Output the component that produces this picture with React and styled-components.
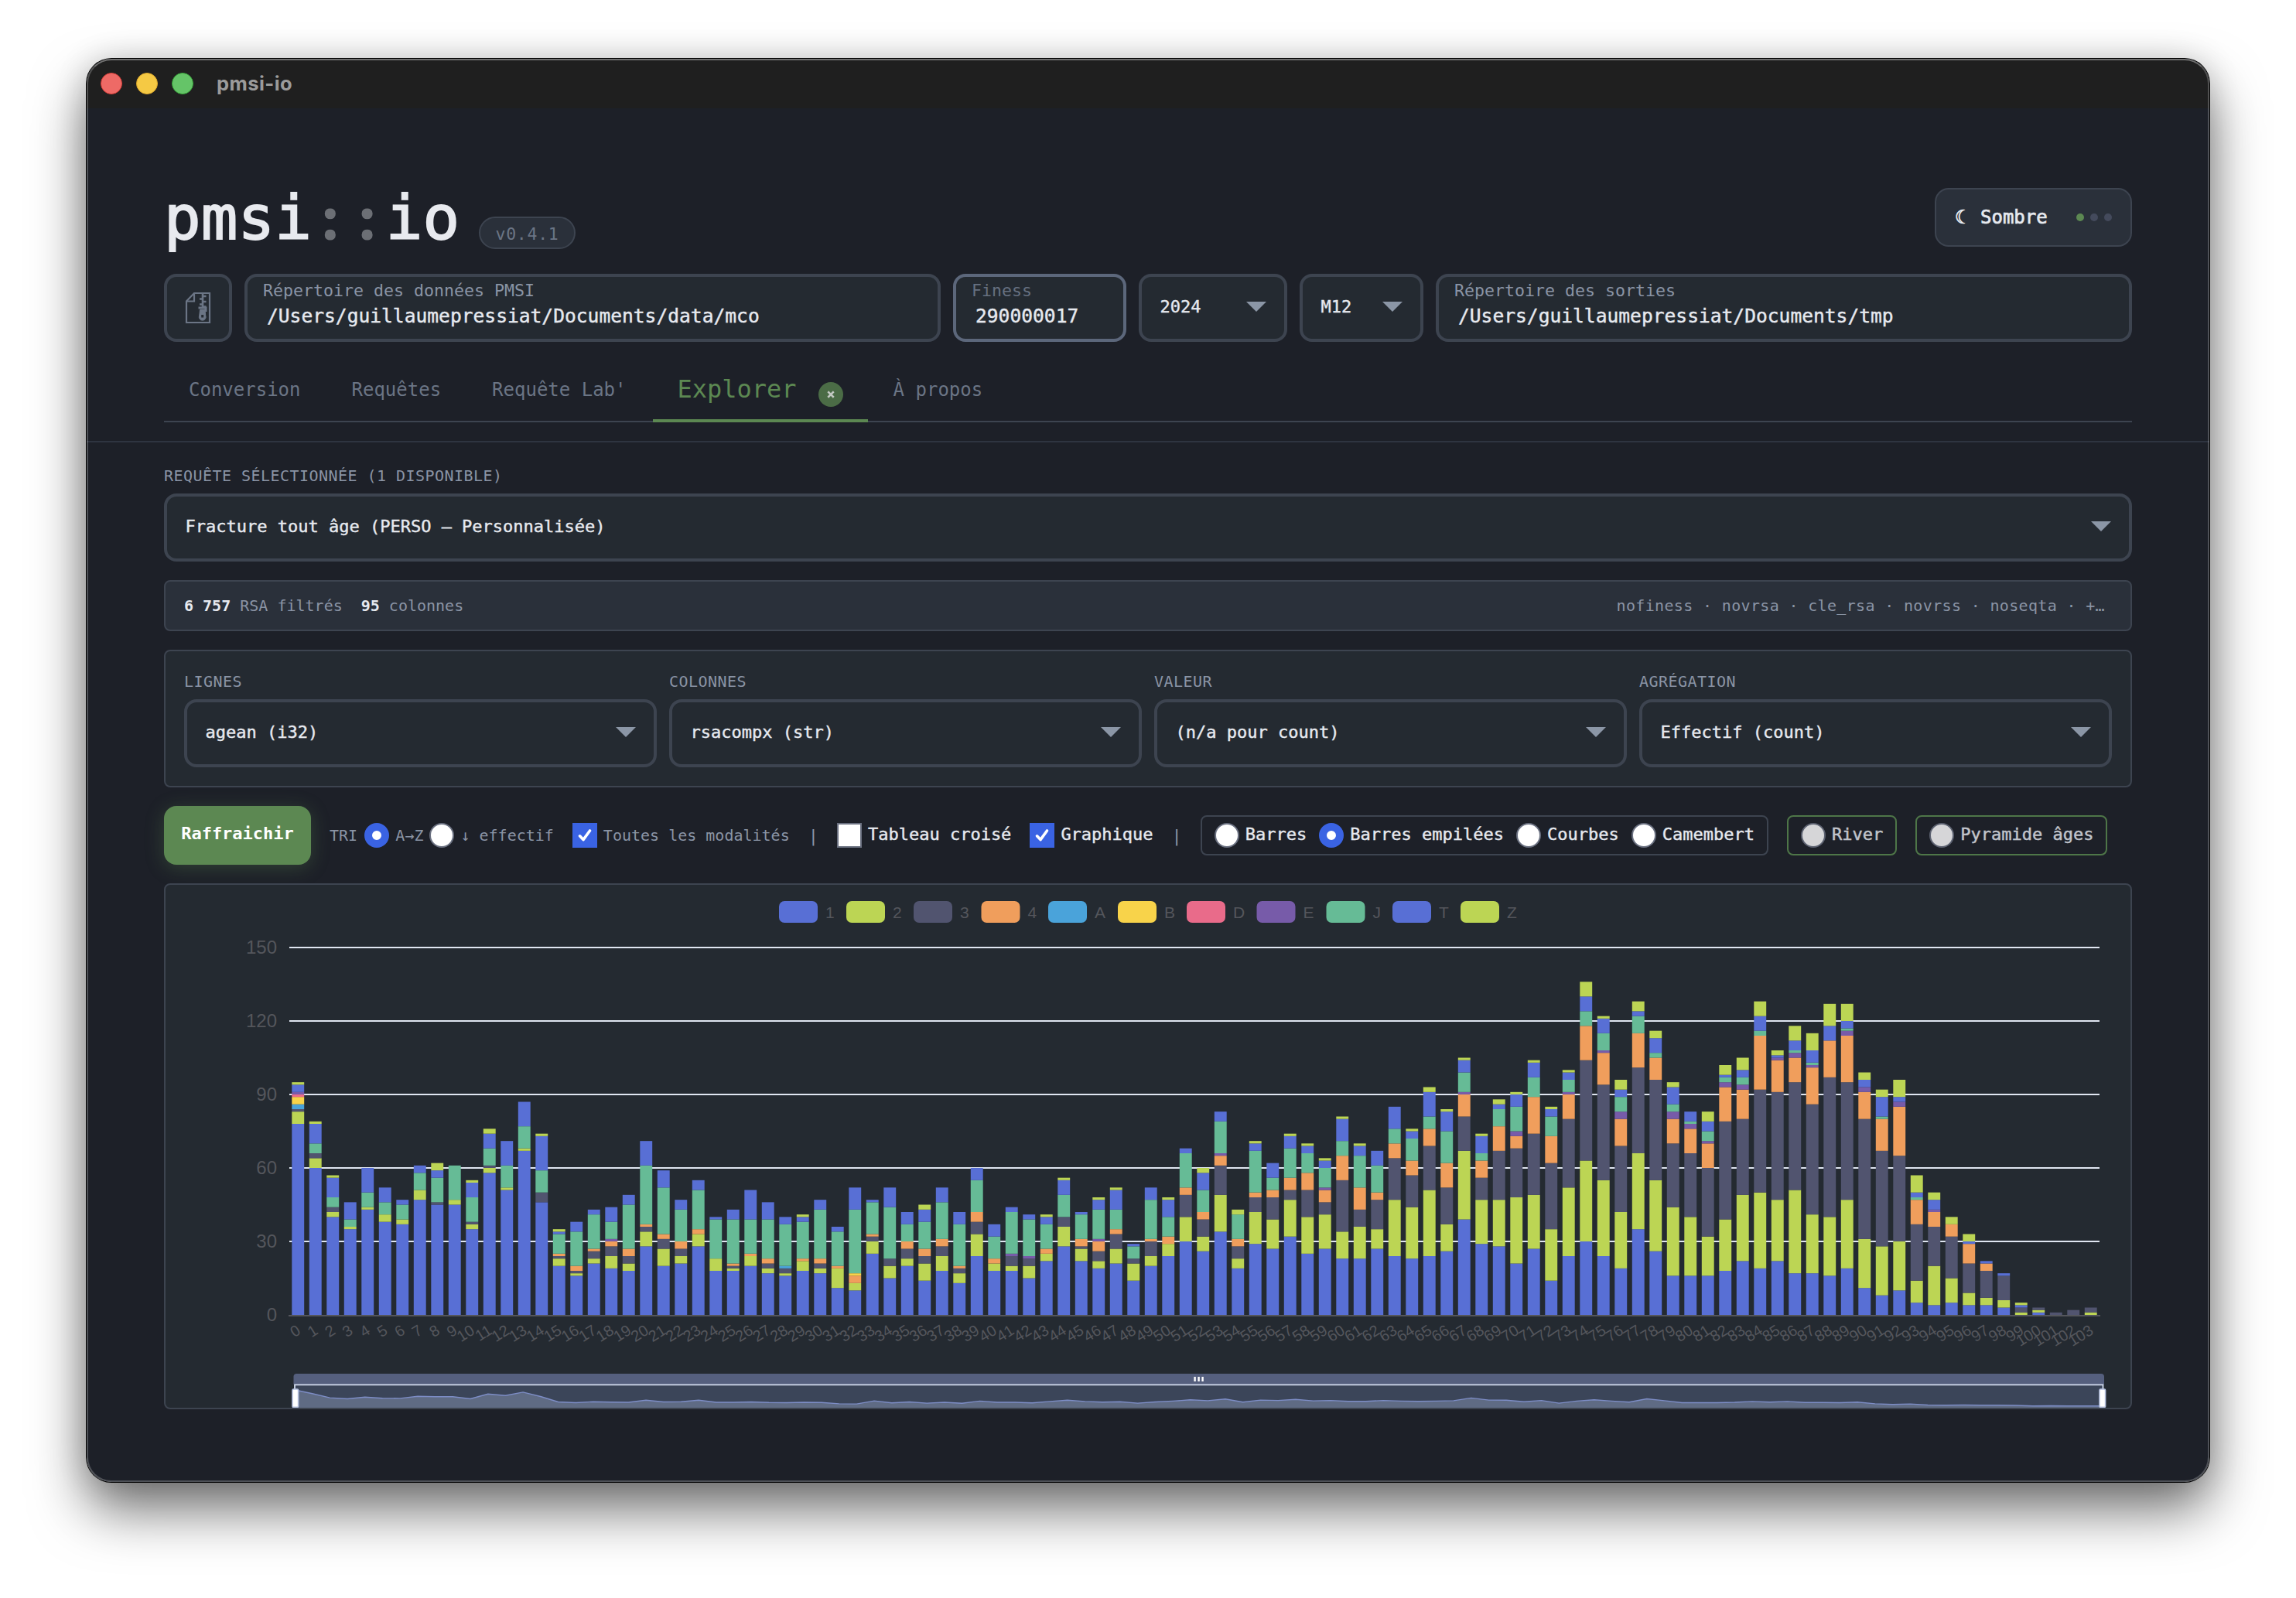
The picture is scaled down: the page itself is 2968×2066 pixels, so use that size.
import React from "react";
import styled, { createGlobalStyle, css } from "styled-components";

const c = {
  bg: "#1d2028",
  surface: "#242a31",
  raised: "#2a303a",
  border: "#3d4450",
  text: "#e6e9ef",
  muted: "#8a94a5",
  dim: "#6b7585",
  green: "#5c8852",
  blue: "#3a63e3",
};

const Global = createGlobalStyle`
  html, body { margin: 0; background: #fff; }
  * { box-sizing: border-box; }
  body { font-family: "DejaVu Sans Mono", monospace; overflow: hidden; }
`;

const Desktop = styled.div`
  width: 2968px;
  height: 2066px;
  padding: 76px 112px;
  overflow: hidden;
  background: #fff;
`;
const Window = styled.div`
  width: 2744px;
  height: 1840px;
  border-radius: 32px;
  background: ${c.bg};
  overflow: hidden;
  position: relative;
  &::after {
    content: "";
    position: absolute;
    inset: 0;
    border-radius: 32px;
    border: 2px solid rgba(255, 255, 255, 0.22);
    border-top-color: rgba(255, 255, 255, 0.36);
    pointer-events: none;
  }
`;
const Shadow = styled.div`
  border-radius: 32px;
  box-shadow: 0 0 0 1px #000, 0 36px 70px rgba(0, 0, 0, 0.56), 0 0 40px rgba(0, 0, 0, 0.16);
`;

const TitleBar = styled.div`
  height: 64px;
  display: flex;
  align-items: center;
  gap: 18px;
  padding-left: 18px;
  background: #1f1f1f;
`;
const Light = styled.i`
  width: 28px;
  height: 28px;
  border-radius: 50%;
  background: ${(p) => p.$color};
  border: 1px solid ${(p) => p.$edge};
`;
const WindowTitle = styled.span`
  margin-left: 12px;
  font: 700 25.5px/64px Inter, sans-serif;
  letter-spacing: 0.45px;
  color: #9b9b9b;
`;

const Header = styled.header`
  height: 432px;
  padding: 103px 100px 0;
  border-bottom: 2px solid #2e3440;
`;
const TopRow = styled.div`
  display: flex;
  height: 76px;
  justify-content: space-between;
`;
const Brand = styled.div`
  display: flex;
  align-items: flex-start;
`;
const Logo = styled.h1`
  display: flex;
  width: 383px;
  margin: 0;
  font-weight: 400;
  font-size: 79px;
  line-height: 79px;
  letter-spacing: 0.2px;
  color: #e8eaef;
  -webkit-text-stroke: 1.8px #e8eaef;
`;
const Colon = styled.span`
  width: 47.8px;
  font-family: "Noto Sans", sans-serif;
  font-weight: 700;
  font-size: 70px;
  text-align: center;
  color: #6c6f75;
  -webkit-text-stroke: 2px #6c6f75;
`;
const Version = styled.span`
  margin: 37px 0 0 24px;
  width: 125px;
  height: 42px;
  border: 2px solid ${c.border};
  border-radius: 21px;
  background: ${c.raised};
  color: ${c.dim};
  font-size: 21.5px;
  letter-spacing: 0.7px;
  line-height: 41px;
  text-align: center;
`;
const ThemeButton = styled.div`
  display: flex;
  align-items: center;
  width: 255px;
  height: 76px;
  padding: 0 24px;
  border: 2px solid ${c.border};
  border-radius: 18px;
  background: ${c.raised};
  color: ${c.text};
  font-size: 24px;
  -webkit-text-stroke: 0.7px ${c.text};
`;
const Moon = styled.span`
  width: 33px;
`;
const Dots = styled.span`
  display: flex;
  gap: 8px;
  margin-left: auto;
`;
const Dot = styled.i`
  width: 10px;
  height: 10px;
  border-radius: 50%;
  background: ${(p) => (p.$on ? c.green : "#444a5c")};
`;

const InputRow = styled.div`
  display: flex;
  gap: 16px;
  margin-top: 35px;
`;
const box = css`
  height: 88px;
  border: 4px solid ${c.border};
  border-radius: 16px;
  background: ${c.surface};
`;
const IconBox = styled.div`
  ${box}
  width: 88px;
  display: flex;
  align-items: center;
  justify-content: center;
`;
const FieldBox = styled.div`
  ${box}
  flex: ${(p) => (p.$width ? `0 0 ${p.$width}px` : "1 1 0")};
  padding: 6px 0 0 20px;
  border-color: ${(p) => (p.$focused ? "#5c677b" : c.border)};
`;
const FieldLabel = styled.div`
  font-size: 21.6px;
  line-height: 24px;
  color: ${(p) => (p.$dim ? "#667080" : c.muted)};
`;
const FieldValue = styled.div`
  margin: 7px 0 0 5px;
  font-size: 24.6px;
  line-height: 28px;
  color: ${c.text};
  -webkit-text-stroke: 0.4px ${c.text};
`;
const SelectBox = styled.div`
  ${box}
  width: ${(p) => (p.$width ? `${p.$width}px` : "100%")};
  display: flex;
  align-items: center;
  justify-content: space-between;
  padding: 0 23px 3px 23.5px;
  font-size: 22px;
  color: ${c.text};
  -webkit-text-stroke: 0.4px ${c.text};
`;
const Caret = styled.i`
  border: 13.5px solid transparent;
  border-top: 13px solid #8b96a6;
  border-bottom: 0;
`;

const Tabs = styled.nav`
  display: flex;
  align-items: flex-end;
  gap: 2px;
  height: 104px;
  border-bottom: 2px solid ${c.border};
`;
const Tab = styled.div`
  padding: 0 32px 26px;
  font-size: 24px;
  line-height: 28px;
  white-space: nowrap;
  color: ${c.dim};
`;
const ActiveTab = styled(Tab)`
  display: flex;
  margin: 0 -1px -2px 1px;
  padding: 0 32px 21px 31px;
  border-bottom: 4px solid ${c.green};
  font-size: 32px;
  line-height: 36px;
  color: ${c.green};
`;
const Close = styled.span`
  display: flex;
  align-items: center;
  justify-content: center;
  width: 32px;
  height: 32px;
  margin: 9px 0 -5px 28px;
  border-radius: 50%;
  background: #4b6c46;
`;

const Main = styled.main`
  display: flex;
  flex-direction: column;
  padding: 31px 100px 0;
`;
const Label = styled.div`
  margin-bottom: 11px;
  font-size: 20px;
  letter-spacing: 0.46px;
  line-height: 24px;
  text-transform: uppercase;
  color: ${c.muted};
`;
const Panel = styled.section`
  margin-top: 24px;
  border: 2px solid ${c.border};
  border-radius: 8px;
  background: ${c.surface};
`;
const InfoBar = styled(Panel)`
  display: flex;
  align-items: center;
  height: 66px;
  padding: 0 33px 0 24px;
  background: ${c.raised};
  color: ${c.muted};
  font-size: 20px;
  b { color: ${c.text}; }
`;
const Stat = styled.span`
  margin-right: 24px;
`;
const Columns = styled.span`
  margin-left: auto;
  font-size: 20px;
  letter-spacing: 0.34px;
`;
const PivotPanel = styled(Panel)`
  display: grid;
  grid-template-columns: repeat(4, 1fr);
  gap: 16px;
  height: 178px;
  padding: 27px 24px 0;
`;
const Toolbar = styled.div`
  display: flex;
  align-items: center;
  gap: 24px;
  height: 76px;
  margin-top: 24px;
  white-space: nowrap;
`;
const Refresh = styled.div`
  width: 190px;
  height: 76px;
  border-radius: 16px;
  background: ${c.green};
  box-shadow: 0 4px 24px rgba(92, 136, 82, 0.32);
  color: #fff;
  font-weight: 700;
  font-size: 22px;
  line-height: 72px;
  text-align: center;
`;
const Group = styled.div`
  display: flex;
  align-items: center;
  gap: ${(p) => p.$gap || 8}px;
`;
const Outlined = styled(Group)`
  height: 52px;
  padding: 0 16px;
  border: 2px solid ${(p) => (p.$green ? "#4e7648" : c.border)};
  border-radius: 8px;
`;
const Small = styled.span`
  font-size: 20px;
  color: ${c.muted};
`;
const SortLabel = styled(Small)`
  margin-right: 1.2px;
`;
const Medium = styled.span`
  padding-bottom: 3px;
  font-size: 22px;
  color: ${c.text};
  -webkit-text-stroke: 0.4px ${c.text};
`;
const Bar = styled.span`
  font-size: 22px;
  color: ${c.muted};
`;
const Option = styled.label`
  display: flex;
  align-items: center;
  gap: 8px;
  opacity: ${(p) => (p.$faded ? 0.82 : 1)};
`;
const Radio = styled.i`
  width: 32px;
  height: 32px;
  border-radius: 50%;
  background: #fff;
  border: ${(p) => (p.$on ? `10px solid ${c.blue}` : "2px solid #6a7080")};
`;
const Check = styled.i`
  display: flex;
  width: 32px;
  height: 32px;
  background: ${(p) => (p.$on ? c.blue : "#fff")};
  border: 2px solid ${(p) => (p.$on ? c.blue : "#6a7080")};
`;
const ChartPanel = styled(Panel)`
  height: 680px;
  overflow: hidden;
  svg { display: block; }
`;

const ZipIcon = () => (
  <svg width="34" height="42" viewBox="0 0 34 42" fill="none" stroke="#6b7585" strokeWidth="2.2">
    <path d="M12 2H32V40H2V12.5Z" />
    <path d="M12 2V12.5H2" />
    <path d="M23 2V22" strokeWidth="2.6" />
    <path d="M23 6h4.5M19 9.5h4.5M23 13h4.5M19 16.5h4.5M23 19.5h4.5" strokeWidth="2.4" />
    <path d="M17.5 21H27v5" strokeWidth="3" />
    <path d="M19.5 23.5l-.8 7.5a4.4 4.4 0 1 0 8 0L26 23.5Z" fill="#6b7585" strokeWidth="1" />
    <path d="M22.7 30v3.5" stroke={c.surface} strokeWidth="3" />
  </svg>
);

const CheckMark = () => (
  <svg width="28" height="28" viewBox="0 0 28 28" fill="none">
    <path d="M7.5 14.8l4.5 4.8L20.5 8" stroke="#fff" strokeWidth="3.6" strokeLinecap="round" strokeLinejoin="round" />
  </svg>
);

const colors = {
  1: "#586fd5", 2: "#bcd554", 3: "#51546f", 4: "#f09e5c", A: "#4aa3da", B: "#f8d34a",
  D: "#e96b8a", E: "#775ba9", J: "#66bb96", T: "#586fd5", Z: "#bcd554",
};

/* One line per age: the cumulated top of every stacked series. */
const stacks = `
1:78 2:83 3:84 A:86 B:89 D:90 E:91 T:94 Z:95
1:60 2:64 3:66 J:70 T:78 Z:79
1:40 2:42 3:44 J:48 T:56 Z:57
1:35 2:36 J:39 T:46
1:43 2:44 J:50 T:60
1:38 2:41 J:46 T:52
1:37 2:39 J:45 T:47
1:47 2:51 J:58 T:61
1:45 3:46 J:56 T:59 Z:62
1:45 2:47 J:61
1:35 2:37 3:38 J:48 T:54 Z:55
1:58 2:60 3:61 J:68 T:74 Z:76
1:51 2:52 J:61 T:71
1:67 2:68 J:77 T:87
1:46 3:50 J:59 T:73 Z:74
1:20 2:23 3:24 4:25 J:33 T:34 Z:35
1:16 2:17 3:18 4:20 J:34 T:38
1:21 2:23 3:26 4:27 J:41 T:43
1:19 2:24 3:28 4:30 E:31 J:38 T:44
1:18 2:21 3:24 4:27 J:45 T:49
1:28 2:34 3:36 4:37 J:61 T:71
1:20 2:27 3:31 4:33 J:52 T:59
1:21 2:24 3:27 4:30 J:43 T:47
1:28 2:33 4:35 J:51 T:55
1:18 2:23 J:39 T:40
1:18 2:19 3:20 4:21 J:39 T:43
1:20 2:24 4:25 J:39 T:51
1:17 2:19 3:21 4:23 J:39 T:46
1:16 2:17 3:19 A:20 J:37 T:40
1:18 2:22 4:23 J:38 T:40 Z:41
1:17 2:19 3:21 4:23 J:43 T:47
1:11 2:19 4:20 J:34 T:36
1:10 2:13 4:16 B:17 J:43 T:52
1:25 2:30 3:32 4:33 J:46 T:47
1:15 2:20 3:23 J:44 T:52
1:20 2:23 3:27 4:30 J:37 T:42
1:14 2:21 3:24 4:27 J:38 T:43 Z:45
1:18 2:24 3:28 4:31 J:46 T:52
1:13 2:17 3:19 4:20 J:37 T:42
1:24 2:33 3:38 4:42 J:55 T:60
1:18 2:21 4:23 J:32 T:37
1:18 2:20 3:24 E:25 J:42 T:44
1:15 2:20 3:23 E:24 J:39 T:41
1:22 2:25 4:27 J:37 T:40 Z:41
1:28 2:36 3:40 J:49 T:55 Z:56
1:22 2:27 3:28 4:31 J:41 T:42
1:19 2:22 3:26 4:30 E:31 J:43 T:47 Z:48
1:21 2:27 3:33 4:35 J:43 T:51 Z:52
1:14 2:21 3:23 J:28 T:29
1:20 2:24 3:30 4:31 J:47 T:52
1:24 2:29 4:32 J:40 T:47 Z:48
1:30 2:40 3:49 4:52 J:66 T:68
1:26 2:32 3:39 4:42 J:51 T:58 Z:60
1:34 2:49 3:61 4:65 E:66 J:79 T:83
1:19 2:23 3:28 4:31 J:41 Z:43
1:29 2:42 3:48 4:50 J:67 T:70 Z:71
1:27 2:39 3:48 4:51 J:56 T:62
1:32 2:47 3:51 4:56 J:68 T:73 Z:74
1:25 2:40 3:51 4:58 J:66 T:69 Z:70
1:27 2:41 3:46 4:51 E:52 J:60 T:63 Z:64
1:23 2:34 3:55 4:65 J:71 T:80 Z:81
1:23 2:36 3:43 4:52 J:65 T:69 Z:70
1:27 2:35 3:47 4:50 J:61 T:67
1:24 2:47 3:64 4:70 J:76 T:85
1:23 2:44 3:57 4:63 J:72 T:75 Z:76
1:24 2:51 3:69 4:76 J:81 T:91 Z:93
1:26 2:37 3:52 4:62 J:75 T:83 Z:84
1:39 2:67 3:81 4:90 E:91 J:99 T:104 Z:105
1:29 2:47 3:56 4:63 J:66 T:73 Z:74
1:28 2:47 3:67 4:77 J:84 T:86 Z:88
1:21 2:48 3:68 4:73 E:75 J:85 T:90 Z:91
1:27 2:49 3:74 4:89 J:97 T:103 Z:104
1:14 2:35 3:62 4:73 J:81 T:84 Z:85
1:24 2:52 3:80 4:90 E:91 J:96 T:99 Z:100
1:30 2:63 3:104 4:118 J:124 T:130 Z:136
1:24 2:55 3:94 4:107 E:108 J:115 T:121 Z:122
1:19 2:42 3:69 4:80 E:83 J:89 T:92 Z:96
1:35 2:66 3:101 4:115 J:122 T:124 Z:128
1:26 2:55 3:96 4:105 J:107 T:113 Z:116
1:16 2:44 3:70 4:80 E:83 J:86 T:93 Z:95
1:16 2:40 3:66 4:76 E:78 J:79 T:83
1:16 2:32 3:60 4:70 E:71 J:75 T:79 Z:83
1:18 2:39 3:79 4:93 E:95 J:97 T:98 Z:102
1:22 2:49 3:80 4:92 E:94 J:97 T:100 Z:105
1:19 2:50 3:92 4:114 J:116 T:122 Z:128
1:22 2:47 3:91 4:104 E:105 T:106 Z:108
1:17 2:51 3:95 4:105 E:107 J:108 T:112 Z:118
1:17 2:41 3:86 4:101 E:102 J:103 T:108 Z:115
1:16 2:40 3:97 4:112 T:118 Z:127
1:19 2:47 3:95 4:114 E:116 J:117 T:120 Z:127
1:11 2:31 3:80 4:91 E:93 T:96 Z:99
1:8 2:28 3:67 4:80 J:81 T:89 Z:92
1:10 2:30 3:65 4:85 E:87 T:89 Z:96
1:5 2:14 3:37 4:47 J:48 T:50 Z:57
1:4 2:20 3:36 4:42 E:43 T:47 Z:50
1:5 2:15 3:32 4:37 Z:40
1:4 2:9 3:21 4:29 T:30 Z:33
1:4 2:7 3:18 4:21 T:22
1:3 2:6 3:16 T:17
2:1 3:3 T:4 Z:5
1:1 2:2 3:3
3:1
3:2
2:1 3:3`
  .trim()
  .split("\n")
  .map((line) => {
    let from = 0;
    return line.split(" ").map((part) => {
      const [key, top] = part.split(":");
      const seg = { key, from, to: Number(top) };
      from = seg.to;
      return seg;
    });
  });

const X0 = 374;
const STEP = 22.5;
const Y0 = 1700;
const UNIT = 475 / 150;

const legend = [
  ["1", 1007], ["2", 1094], ["3", 1181], ["4", 1268.5], ["A", 1355], ["B", 1445],
  ["D", 1534], ["E", 1624.5], ["J", 1714.5], ["T", 1800], ["Z", 1888],
];

const overview = stacks.map((s, i) => {
  const v = s[0].key === "1" ? s[0].to : 0;
  return `${(381 + (i * 2338) / 103).toFixed(1)},${(1817.8 - v * 0.267).toFixed(1)}`;
});

function StackedBars() {
  return (
    <svg width="2540" height="676" viewBox="214 1144 2540 676" fontFamily='"Liberation Sans", Arial, sans-serif'>
      {legend.map(([key, x]) => (
        <g key={key}>
          <rect x={x} y="1165" width="50" height="28" rx="7" fill={colors[key]} />
          <text x={x + 60} y="1187" fontSize="21" fill="#54565c">{key}</text>
        </g>
      ))}
      {[150, 120, 90, 60, 30].map((v) => (
        <rect key={v} x={X0} y={Math.round(Y0 - v * UNIT) - 1} width="2340" height="2" fill="#e0e6f1" />
      ))}
      {[150, 120, 90, 60, 30, 0].map((v) => (
        <text key={v} x="358" y={Y0 - v * UNIT + 8} fontSize="24" textAnchor="end" fill="#54565c">{v}</text>
      ))}
      {stacks.map((segs, i) =>
        segs.map((s) => (
          <rect
            key={`${i}-${s.key}`}
            x={X0 + STEP * i + 3.3}
            y={Y0 - s.to * UNIT}
            width="15.9"
            height={(s.to - s.from) * UNIT}
            fill={colors[s.key]}
          />
        ))
      )}
      <rect x="373" y="1700" width="2342" height="2" fill="#54565c" />
      {stacks.map((_, i) => {
        const x = X0 + STEP * (i + 0.5) + 0.8;
        return (
          <text key={i} x={x} y="1724.7" fontSize="20" textAnchor="end" fill="#54565c" transform={`rotate(-32 ${x} 1717.5)`}>
            {i}
          </text>
        );
      })}
      <path d="M379.5 1790V1780a4 4 0 0 1 4-4H2716a4 4 0 0 1 4 4V1790Z" fill="#555f7e" />
      <rect x="381" y="1790" width="2338" height="32" fill="#3b4559" />
      <polygon points={`381,1822 ${overview.join(" ")} 2719,1822`} fill="#5f6b84" />
      <polyline points={overview.join(" ")} fill="none" stroke="#7d8dc6" strokeWidth="1.4" />
      <path d="M381 1822V1790.3H2718.5V1822" fill="none" stroke="#d2dbee" strokeWidth="1.8" />
      {[1543.4, 1548.4, 1553.4].map((x) => (
        <rect key={x} x={x} y="1780" width="2.4" height="6" fill="#fff" />
      ))}
      {[378, 2714].map((x) => (
        <rect key={x} x={x} y="1796" width="7.6" height="23.4" rx="1.5" fill="#fff" stroke="#b9c4e2" strokeWidth="1.6" />
      ))}
    </svg>
  );
}

const pivots = [
  ["Lignes", "agean (i32)"],
  ["Colonnes", "rsacompx (str)"],
  ["Valeur", "(n/a pour count)"],
  ["Agrégation", "Effectif (count)"],
];

const Select = ({ children, width }) => (
  <SelectBox $width={width}>
    <span>{children}</span>
    <Caret />
  </SelectBox>
);

const RadioOption = ({ children, on, faded }) => (
  <Option $faded={faded}>
    <Radio $on={on} />
    <Medium>{children}</Medium>
  </Option>
);

export default function App() {
  return (
    <Desktop>
      <Global />
      <Shadow>
        <Window>
          <TitleBar>
            <Light $color="#ee6a66" $edge="#d9403c" />
            <Light $color="#f5c944" $edge="#dba62a" />
            <Light $color="#65c468" $edge="#3aa63c" />
            <WindowTitle>pmsi-io</WindowTitle>
          </TitleBar>
          <Header>
            <TopRow>
              <Brand>
                <Logo>
                  <span>pmsi</span>
                  <Colon>:</Colon>
                  <Colon>:</Colon>
                  <span>io</span>
                </Logo>
                <Version>v0.4.1</Version>
              </Brand>
              <ThemeButton>
                <Moon>☾</Moon>
                Sombre
                <Dots>
                  <Dot $on />
                  <Dot />
                  <Dot />
                </Dots>
              </ThemeButton>
            </TopRow>
            <InputRow>
              <IconBox><ZipIcon /></IconBox>
              <FieldBox>
                <FieldLabel>Répertoire des données PMSI</FieldLabel>
                <FieldValue>/Users/guillaumepressiat/Documents/data/mco</FieldValue>
              </FieldBox>
              <FieldBox $width={224} $focused>
                <FieldLabel $dim>Finess</FieldLabel>
                <FieldValue>290000017</FieldValue>
              </FieldBox>
              <Select width={192}>2024</Select>
              <Select width={160}>M12</Select>
              <FieldBox>
                <FieldLabel>Répertoire des sorties</FieldLabel>
                <FieldValue>/Users/guillaumepressiat/Documents/tmp</FieldValue>
              </FieldBox>
            </InputRow>
            <Tabs>
              <Tab>Conversion</Tab>
              <Tab>Requêtes</Tab>
              <Tab>Requête Lab'</Tab>
              <ActiveTab>
                Explorer
                <Close>
                  <svg width="10" height="10" viewBox="0 0 12 12" stroke="#c3c9c3" strokeWidth="3">
                    <path d="M1.5 1.5l9 9M10.5 1.5l-9 9" />
                  </svg>
                </Close>
              </ActiveTab>
              <Tab>À propos</Tab>
            </Tabs>
          </Header>
          <Main>
            <Label>Requête sélectionnée (1 disponible)</Label>
            <Select>Fracture tout âge (PERSO – Personnalisée)</Select>
            <InfoBar>
              <Stat><b>6 757</b> RSA filtrés</Stat>
              <Stat><b>95</b> colonnes</Stat>
              <Columns>nofiness · novrsa · cle_rsa · novrss · noseqta · +…</Columns>
            </InfoBar>
            <PivotPanel>
              {pivots.map(([label, value]) => (
                <div key={label}>
                  <Label>{label}</Label>
                  <Select>{value}</Select>
                </div>
              ))}
            </PivotPanel>
            <Toolbar>
              <Refresh>Raffraichir</Refresh>
              <Group>
                <SortLabel>TRI</SortLabel>
                <Radio $on />
                <Small>A→Z</Small>
                <Radio />
                <Small>↓ effectif</Small>
              </Group>
              <Option>
                <Check $on><CheckMark /></Check>
                <Small>Toutes les modalités</Small>
              </Option>
              <Bar>|</Bar>
              <Option>
                <Check />
                <Medium>Tableau croisé</Medium>
              </Option>
              <Option>
                <Check $on><CheckMark /></Check>
                <Medium>Graphique</Medium>
              </Option>
              <Bar>|</Bar>
              <Outlined $gap={16}>
                <RadioOption>Barres</RadioOption>
                <RadioOption on>Barres empilées</RadioOption>
                <RadioOption>Courbes</RadioOption>
                <RadioOption>Camembert</RadioOption>
              </Outlined>
              <Outlined $green>
                <RadioOption faded>River</RadioOption>
              </Outlined>
              <Outlined $green>
                <RadioOption faded>Pyramide âges</RadioOption>
              </Outlined>
            </Toolbar>
            <ChartPanel>
              <StackedBars />
            </ChartPanel>
          </Main>
        </Window>
      </Shadow>
    </Desktop>
  );
}
